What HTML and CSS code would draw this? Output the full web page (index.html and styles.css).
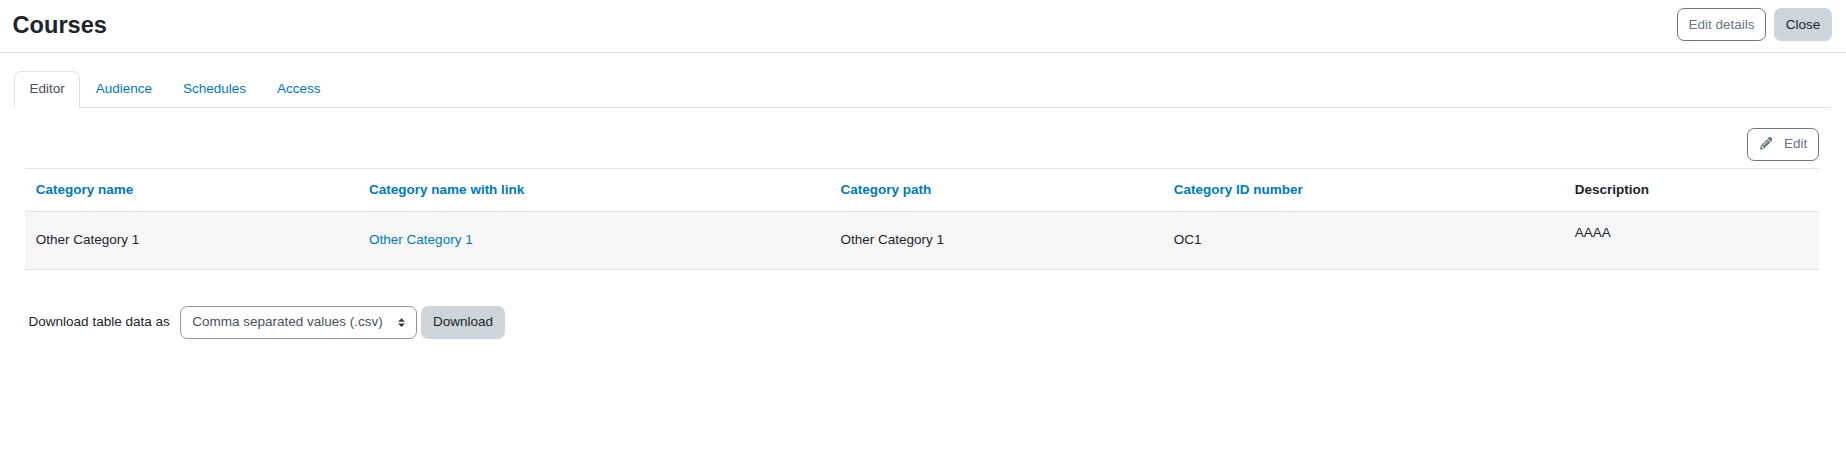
FILE: index.html
```html
<!DOCTYPE html>
<html lang="en">
<head>
  <meta charset="UTF-8">
  <meta name="viewport" content="width=device-width, initial-scale=1.0">
  <title>Courses</title>
  <link rel="stylesheet" href="styles.css">
</head>
<body>
  <header class="page-header">
    <h1>Courses</h1>
    <div class="header-actions">
      <button class="btn btn-outline">Edit details</button>
      <button class="btn btn-secondary">Close</button>
    </div>
  </header>

  <nav class="nav-tabs">
    <a class="nav-link active" href="#">Editor</a>
    <a class="nav-link" href="#">Audience</a>
    <a class="nav-link" href="#">Schedules</a>
    <a class="nav-link" href="#">Access</a>
  </nav>

  <main class="report">
    <div class="report-actions">
      <button class="btn btn-outline">
        <svg class="icon" viewBox="0 0 512 512"><path fill="currentColor" d="M410.3 231l11.3-11.3-33.9-33.9-62.1-62.1L291.7 89.8l-11.3 11.3-22.6 22.6L58.6 322.9c-10.4 10.4-18 23.3-22.2 37.4L1 480.7c-2.5 8.4-.2 17.5 6.1 23.7s15.3 8.5 23.7 6.1l120.3-35.4c14.1-4.2 27-11.8 37.4-22.2L387.7 253.7 410.3 231zM160 399.4l-9.1 22.7c-4 3.1-8.5 5.4-13.3 6.9L59.4 452l23-78.1c1.4-4.9 3.8-9.4 6.9-13.3l22.7-9.1v32c0 8.8 7.2 16 16 16h32zM362.7 18.7L348.3 33.2 325.7 55.8 314.3 67.1l33.9 33.9 62.1 62.1 33.9 33.9 11.3-11.3 22.6-22.6 14.5-14.5c25-25 25-65.5 0-90.5L453.3 18.7c-25-25-65.5-25-90.5 0zm-47.4 168l-144 144c-6.2 6.2-16.4 6.2-22.6 0s-6.2-16.4 0-22.6l144-144c6.2-6.2 16.4-6.2 22.6 0s6.2 16.4 0 22.6z"/></svg>Edit
      </button>
    </div>

    <table class="report-table">
      <colgroup>
        <col class="col-name">
        <col class="col-link">
        <col class="col-path">
        <col class="col-id">
        <col>
      </colgroup>
      <thead>
        <tr>
          <th><a href="#">Category name</a></th>
          <th><a href="#">Category name with link</a></th>
          <th><a href="#">Category path</a></th>
          <th><a href="#">Category ID number</a></th>
          <th>Description</th>
        </tr>
      </thead>
      <tbody>
        <tr>
          <td>Other Category 1</td>
          <td><a href="#">Other Category 1</a></td>
          <td>Other Category 1</td>
          <td>OC1</td>
          <td><p>AAAA</p></td>
        </tr>
      </tbody>
    </table>

    <form class="download-form">
      <label for="format">Download table data as</label>
      <select id="format" class="custom-select">
        <option>Comma separated values (.csv)</option>
      </select>
      <button type="button" class="btn btn-secondary">Download</button>
    </form>
  </main>
</body>
</html>
```

FILE: styles.css
```css
html {
  font-size: 14.4px;
}
*, *::before, *::after {
  box-sizing: border-box;
}
body {
  margin: 0;
  font-family: "Liberation Sans", Arial, sans-serif;
  font-size: 0.9375rem;
  line-height: 1.5;
  color: #1d2529;
  background: #fff;
}
a {
  color: #0079bc;
  text-decoration: none;
}
.page-header {
  display: flex;
  align-items: center;
  justify-content: space-between;
  height: 53px;
  padding: 0 14px 3px 12.5px;
  border-bottom: 1px solid #dee2e6;
}
.page-header h1 {
  margin: 0;
  padding-top: 2px;
  font-size: 1.640625rem;
  line-height: 1.2;
}
.header-actions {
  display: flex;
  gap: 7.6px;
}
.header-actions .btn {
  padding-top: 2px;
}
.btn {
  height: 33px;
  padding: 0 0.75rem;
  border: 1px solid transparent;
  border-radius: 0.5rem;
  font: inherit;
  white-space: nowrap;
  cursor: pointer;
}
.btn-outline {
  color: #6a7680;
  background: #fff;
  border-color: #6a7680;
}
.btn-secondary {
  color: #1d2529;
  background: #ced5da;
}

/* Tabs */
.nav-tabs {
  display: flex;
  gap: 0.2px;
  margin: 18px 15px 0 14px;
  border-bottom: 1px solid #dee2e6;
}
.nav-link {
  height: 37px;
  margin-bottom: -1px;
  padding: 0.5rem 1rem;
  border: 1px solid transparent;
  border-radius: 0.5rem 0.5rem 0 0;
}
.nav-link.active {
  color: #495057;
  background: #fff;
  border-color: #dee2e6 #dee2e6 #fff;
}

/* Report */
.report {
  padding: 20px 27px 0 25px;
}
.report-actions {
  display: flex;
  justify-content: flex-end;
  margin-bottom: 7px;
}
.icon {
  width: 12.5px;
  height: 12.5px;
  margin: 0 11.5px 0 1px;
  vertical-align: -1.5px;
}
.report-table {
  width: 100%;
  table-layout: fixed;
  border-collapse: collapse;
  border-bottom: 1px solid #dee2e6;
}
.col-name,
.col-path {
  width: 333.3px;
}
.col-link {
  width: 471.3px;
}
.col-id {
  width: 401px;
}
.report-table th,
.report-table td {
  padding: 0 0.75rem;
  text-align: left;
  border-top: 1px solid #dee2e6;
}
.report-table th {
  height: 43px;
}
.report-table td {
  height: 58px;
}
.report-table tbody tr {
  background: #f7f7f7;
}
.report-table p {
  margin: 0 0 1rem;
}

.download-form {
  display: flex;
  align-items: center;
  margin: 36px 0 0 3.6px;
}
.custom-select {
  width: 237px;
  height: 33px;
  margin: 0 4.4px 0 10px;
  padding: 0 1.75rem 0 0.8rem;
  appearance: none;
  font: inherit;
  color: #495057;
  border: 1px solid #8f959e;
  border-radius: 0.5rem;
  background: #fff url("data:image/svg+xml,%3csvg xmlns='http://www.w3.org/2000/svg' viewBox='0 0 4 5'%3e%3cpath fill='%23343a40' d='M2 0L0 2h4zm0 5L0 3h4z'/%3e%3c/svg%3e") no-repeat right 0.75rem center / 7px 9px;
}
```
